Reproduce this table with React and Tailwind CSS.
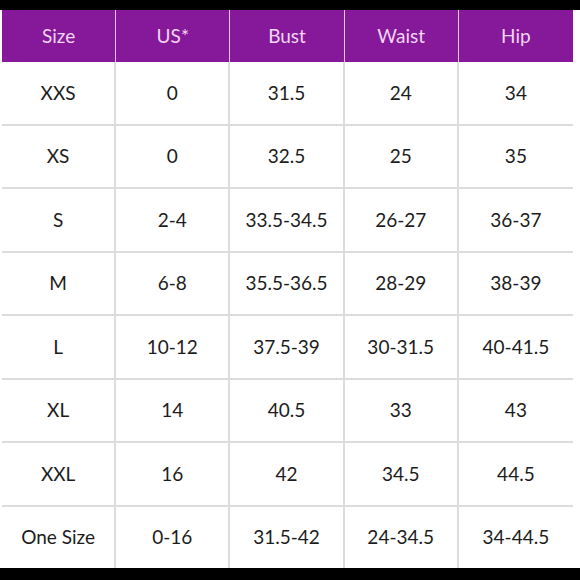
import React from 'react';

const headers = ['Size', 'US*', 'Bust', 'Waist', 'Hip'];

const rows = [
  ['XXS', '0', '31.5', '24', '34'],
  ['XS', '0', '32.5', '25', '35'],
  ['S', '2-4', '33.5-34.5', '26-27', '36-37'],
  ['M', '6-8', '35.5-36.5', '28-29', '38-39'],
  ['L', '10-12', '37.5-39', '30-31.5', '40-41.5'],
  ['XL', '14', '40.5', '33', '43'],
  ['XXL', '16', '42', '34.5', '44.5'],
  ['One Size', '0-16', '31.5-42', '24-34.5', '34-44.5'],
];

const App = () => {
  return (
    <div className="w-[580px] h-[580px] bg-white flex flex-col font-['Lato','Liberation_Sans',sans-serif]">
      {/* top bar */}
      <div className="h-[10px] bg-black" />

      <div className="flex-1 flex flex-col w-[573px] pl-[2px]">
        {/* header */}
        <div className="h-[52px] grid grid-cols-5 bg-[#86189a]">
          {headers.map((h, i) => (
            <div
              key={h}
              className={`flex items-center justify-center text-[19px] text-[#f3d6f3] ${i < 4 ? 'border-r border-[#e9c6ee]' : ''}`}
            >
              {h}
            </div>
          ))}
        </div>

        {/* body */}
        <div className="flex-1 flex flex-col">
          {rows.map((r, ri) => (
            <div key={ri} className={`flex-1 grid grid-cols-5 ${ri > 0 ? 'border-t-2 border-[#dcdcdc]' : ''}`}>
              {r.map((c, ci) => (
                <div
                  key={ci}
                  className={`flex items-center justify-center text-[19px] text-[#1c1c1c] ${ci < 4 ? 'border-r-2 border-[#dcdcdc]' : ''}`}
                >
                  {c}
                </div>
              ))}
            </div>
          ))}
        </div>
      </div>

      {/* bottom bar */}
      <div className="h-[12px] bg-black" />
    </div>
  );
};

export default App;
